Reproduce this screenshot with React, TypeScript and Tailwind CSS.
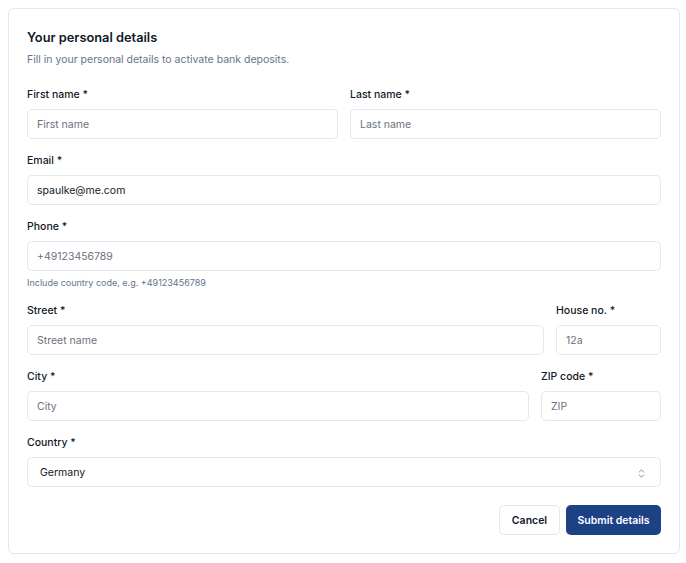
import { ChevronsUpDown } from "lucide-react"

const inputCls =
  "h-[30px] w-full rounded-[5px] border border-[#e2e8f0] bg-white px-[9px] text-[10.5px] text-[#111827] placeholder:text-[#6b7280] outline-none"

const Field = ({
  label,
  children,
  hint,
}: {
  label: string
  children: React.ReactNode
  hint?: string
}) => (
  <div className="flex flex-col">
    <label className="pt-[1px] text-[10.5px] leading-[16px] font-medium text-[#111827]">{label}</label>
    <div className="mt-[6px]">{children}</div>
    {hint && <p className="mt-[5px] text-[9px] leading-[14px] text-[#64748b]">{hint}</p>}
  </div>
)

const App = () => {
  return (
    <div className="pl-[8px] pt-[8px] font-['Inter',sans-serif]">
      <div className="w-[672px] rounded-[6px] border border-[#e2e8f0] bg-white p-[18px]">
        <h1 className="pt-[1px] text-[12.8px] leading-[20px] font-semibold text-[#111827]">
          Your personal details
        </h1>
        <p className="mt-[4px] text-[10.5px] leading-[16px] text-[#64748b]">
          Fill in your personal details to activate bank deposits.
        </p>

        <form className="mt-[18px] flex flex-col gap-[13px]">
          <div className="grid grid-cols-2 gap-[12px]">
            <Field label="First name *">
              <input className={inputCls} placeholder="First name" />
            </Field>
            <Field label="Last name *">
              <input className={inputCls} placeholder="Last name" />
            </Field>
          </div>

          <Field label="Email *">
            <input className={inputCls} defaultValue="spaulke@me.com" />
          </Field>

          <Field label="Phone *" hint="Include country code, e.g. +49123456789">
            <input className={inputCls} placeholder="+49123456789" />
          </Field>

          <div className="grid grid-cols-[1fr_105px] gap-[12px] -mt-[1px]">
            <Field label="Street *">
              <input className={inputCls} placeholder="Street name" />
            </Field>
            <Field label="House no. *">
              <input className={inputCls} placeholder="12a" />
            </Field>
          </div>

          <div className="grid grid-cols-[1fr_120px] gap-[12px]">
            <Field label="City *">
              <input className={inputCls} placeholder="City" />
            </Field>
            <Field label="ZIP code *">
              <input className={inputCls} placeholder="ZIP" />
            </Field>
          </div>

          <Field label="Country *">
            <div className="flex h-[30px] w-full items-center justify-between rounded-[5px] border border-[#e2e8f0] bg-white pt-[2px] pl-[12px] pr-[13px] text-[10.5px] text-[#111827]">
              <span>Germany</span>
              <ChevronsUpDown className="h-[11px] w-[11px] text-[#6b7280]" strokeWidth={1.75} />
            </div>
          </Field>

          <div className="mt-[5px] flex justify-end gap-[6px]">
            <button
              type="button"
              className="h-[30px] w-[61px] rounded-[5px] border border-[#e2e8f0] bg-white pt-[2px] text-[10.5px] font-semibold text-[#111827]"
            >
              Cancel
            </button>
            <button
              type="button"
              className="h-[30px] w-[95px] rounded-[5px] bg-[#1d4185] pt-[2px] text-[10.5px] font-semibold text-white"
            >
              Submit details
            </button>
          </div>
        </form>
      </div>
    </div>
  )
}

export default App
